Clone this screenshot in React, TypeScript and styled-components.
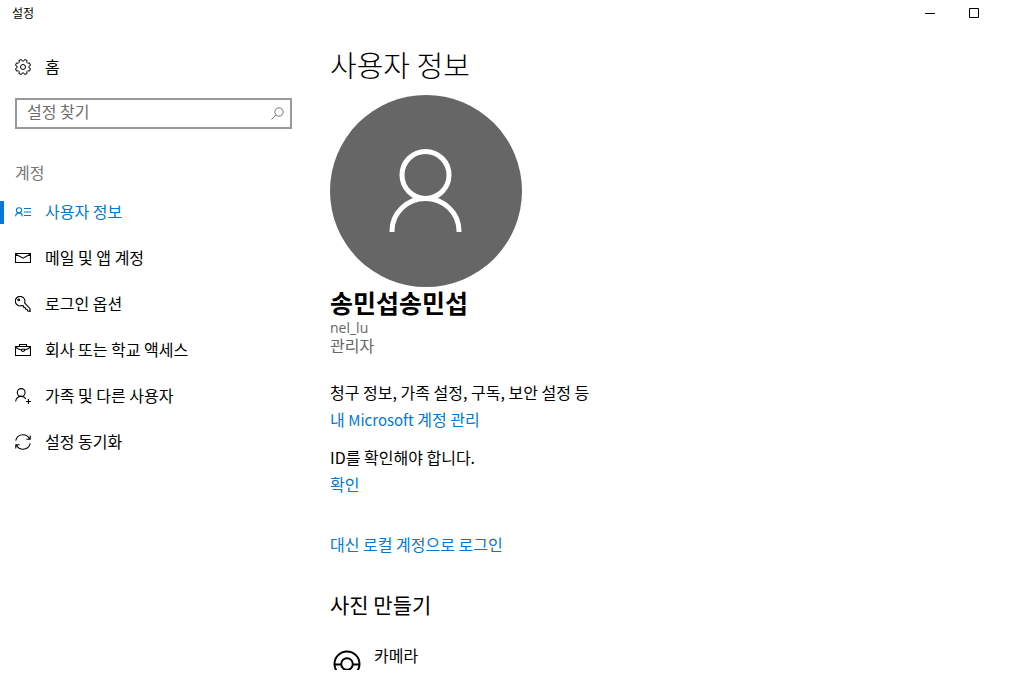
import React from "react";
import styled, { createGlobalStyle } from "styled-components";

const GlobalStyle = createGlobalStyle`
  * { box-sizing: border-box; }
  body {
    margin: 0;
    background: #fff;
    color: #000;
    font-family: "Noto Sans CJK KR", sans-serif;
    font-size: 16px;
    line-height: 24px;
  }
  h1, h2, h3, p, ul { margin: 0; padding: 0; }
`;

const Window = styled.div`
  height: 100vh;
  display: flex;
  flex-direction: column;
  overflow: hidden;
  padding-bottom: 6px;
`;

const TitleBar = styled.header`
  flex: none;
  height: 28px;
  display: flex;
  align-items: center;
  justify-content: space-between;
  padding: 0 28px 2px 12px;
  font-size: 12px;
`;

const Controls = styled.div`
  display: flex;
`;

const ControlButton = styled.button`
  width: 44px;
  height: 26px;
  padding: 0;
  border: 0;
  background: none;
  display: flex;
  align-items: center;
  justify-content: center;
`;

const Body = styled.div`
  flex: 1;
  min-height: 0;
  display: flex;
`;

const Sidebar = styled.aside`
  flex: none;
  width: 330px;
  padding-top: 15px;
`;

const NavLink = styled.a<{ $active?: boolean }>`
  height: 46px;
  display: flex;
  align-items: center;
  gap: 14px;
  position: relative;
  padding-left: 15px;
  color: ${(p) => (p.$active ? "#0078d7" : "#000")};
  text-decoration: none;

  svg { margin-top: 2px; }

  &::before {
    content: "";
    display: ${(p) => (p.$active ? "block" : "none")};
    position: absolute;
    left: 0;
    top: 13px;
    width: 4px;
    height: 23px;
    background: #0078d7;
  }
`;

const NavList = styled.ul`
  list-style: none;
`;

const SearchBox = styled.label`
  display: flex;
  align-items: center;
  height: 31px;
  margin: 9px 38px 0 15px;
  padding: 0 6px 0 10px;
  border: 2px solid #999;
`;

const SearchInput = styled.input`
  flex: 1;
  min-width: 0;
  height: 27px;
  padding: 0 0 5px;
  border: 0;
  outline: 0;
  background: none;
  font: 16px/22px "Noto Sans CJK KR", sans-serif;
  &::placeholder { color: #6d6d6d; opacity: 1; }
`;

const GroupTitle = styled.h2`
  margin: 31px 0 4px 15px;
  font-size: 16px;
  font-weight: 400;
  color: #767676;
`;

const Content = styled.main`
  flex: 1;
  min-width: 0;
  overflow: hidden;
  padding-top: 16px;
`;

const PageTitle = styled.h1`
  font-size: 29px;
  line-height: 40px;
  font-weight: 300;
`;

const Avatar = styled.svg`
  display: block;
  width: 192px;
  height: 192px;
  margin-top: 11px;
`;

const UserName = styled.h2`
  font-size: 25px;
  line-height: 30px;
  font-weight: 700;
`;

const UserDetail = styled.p`
  font-family: "Open Sans", "Noto Sans CJK KR", sans-serif;
  line-height: 19px;
  color: #666;
`;

const UserId = styled(UserDetail)`
  margin-top: 1px;
  font-size: 14px;
`;

const Section = styled.section<{ $top: number }>`
  display: flex;
  flex-direction: column;
  align-items: flex-start;
  gap: 3px;
  margin-top: ${(p) => p.$top}px;
`;

const Link = styled.a`
  color: #0078d7;
  text-decoration: none;
`;

const Latin = styled.span`
  font-size: 15px;
`;

const SectionTitle = styled.h3`
  margin-top: 34px;
  font-size: 21px;
  line-height: 28px;
  font-weight: 400;
`;

const CameraLink = styled.a`
  display: flex;
  gap: 13px;
  margin-top: 25px;
  padding-left: 3px;
  color: #000;
  text-decoration: none;
  svg { margin-top: 7px; }
`;

const Glyph = ({ children }: { children: React.ReactNode }) => (
  <svg width="16" height="16" viewBox="0 0 16 16" fill="none" stroke="currentColor" strokeWidth="1.1" aria-hidden="true">
    {children}
  </svg>
);

const gearPath = Array.from({ length: 8 }, (_, i) => {
  const at = (r: number, deg: number) => {
    const a = ((deg + 22.5 + i * 45) * Math.PI) / 180;
    return `${(8 + r * Math.sin(a)).toFixed(2)} ${(8 - r * Math.cos(a)).toFixed(2)}`;
  };
  return `${i ? "L" : "M"}${at(7.7, -10)} L${at(7.7, 10)} L${at(6, 15)} L${at(6, 30)}`;
}).join(" ") + "Z";

const items = [
  {
    label: "사용자 정보",
    icon: <><circle cx="4" cy="6.3" r="2.6" /><path d="M.5 12.300c.4-2.200 1.700-3.400 3.500-3.400s3.100 1.200 3.500 3.400M9 4.500h7M9 8h7M9 11.500h7" /></>,
  },
  {
    label: "메일 및 앱 계정",
    icon: <path d="M.5 3.500h15v9H.5zM.8 4.200 8 8.200l7.200-4" />,
  },
  {
    label: "로그인 옵션",
    icon: <><path d="M9.600 6.900A4.800 4.800 0 1 0 6.900 9.600l1.500.2.300 1.500 1.500.3.300 1.500 1.600.3.600 1.500 2.500.4-.2-2.600z" /><circle cx="3.700" cy="3.900" r=".9" /></>,
  },
  {
    label: "회사 또는 학교 액세스",
    icon: <path d="M.5 4.500h15v9H.5zM4.500 4.300V2.500h7v1.800M.8 5.200c1.600 1.300 3.500 2.300 5.700 2.800M15.200 5.200c-1.600 1.300-3.500 2.300-5.700 2.800M6.500 7.200h3v1.500q-1.500 1.500-3 0z" />,
  },
  {
    label: "가족 및 다른 사용자",
    icon: <><circle cx="6.200" cy="4.500" r="3.900" /><path d="M.6 13.500c.5-3.200 2.600-5.100 5.600-5.100 2.100 0 3.700.9 4.700 2.500M13.400 11v5M11 13.500h5" /></>,
  },
  {
    label: "설정 동기화",
    icon: <path d="M.7 6.600C1.700 3 4.500.8 8 .8c2.900 0 5.300 1.600 6.600 4.200M15.200 1.500V5.300h-3.800M15.300 9.400c-1 3.600-3.800 5.800-7.300 5.800-2.900 0-5.300-1.600-6.600-4.200M.8 14.500v-3.800h3.800" />,
  },
];

export default function App() {
  return (
    <Window>
      <GlobalStyle />
      <TitleBar>
        <span>설정</span>
        <Controls>
          <ControlButton aria-label="최소화">
            <svg width="10" height="10"><path d="M0 5.500h10" stroke="#000" /></svg>
          </ControlButton>
          <ControlButton aria-label="최대화">
            <svg width="10" height="10"><path d="M.5.5h9v9h-9z" fill="none" stroke="#000" /></svg>
          </ControlButton>
        </Controls>
      </TitleBar>
      <Body>
        <Sidebar>
          <NavLink href="#home">
            <Glyph><path d={gearPath} strokeWidth="1" /><circle cx="8" cy="8" r="2.500" strokeWidth="1" /></Glyph>
            홈
          </NavLink>
          <SearchBox>
            <SearchInput type="text" placeholder="설정 찾기" aria-label="설정 찾기" />
            <svg width="13" height="13" viewBox="0 0 13 13" fill="none" stroke="#777" aria-hidden="true">
              <circle cx="8" cy="5" r="4.200" /><path d="M5 8 .5 12.500" />
            </svg>
          </SearchBox>
          <GroupTitle>계정</GroupTitle>
          <nav>
            <NavList>
              {items.map((item, i) => (
                <li key={item.label}>
                  <NavLink href="#" $active={i === 0} aria-current={i === 0 ? "page" : undefined}>
                    <Glyph>{item.icon}</Glyph>
                    {item.label}
                  </NavLink>
                </li>
              ))}
            </NavList>
          </nav>
        </Sidebar>
        <Content>
          <PageTitle>사용자 정보</PageTitle>
          <Avatar viewBox="0 0 192 192" aria-hidden="true">
            <circle cx="96" cy="96" r="96" fill="#666" />
            <g fill="none" stroke="#fff" strokeWidth="5">
              <circle cx="95.500" cy="80" r="23.500" />
              <path d="M62 137v-1a33.500 32.500 0 0 1 67 0v1" />
            </g>
          </Avatar>
          <UserName>송민섭송민섭</UserName>
          <UserId>nel_lu</UserId>
          <UserDetail>관리자</UserDetail>
          <Section $top={24}>
            <p>청구 정보, 가족 설정, 구독, 보안 설정 등</p>
            <Link href="#account">내 <Latin>Microsoft</Latin> 계정 관리</Link>
          </Section>
          <Section $top={13}>
            <p>ID를 확인해야 합니다.</p>
            <Link href="#verify">확인</Link>
          </Section>
          <Section $top={36}>
            <Link href="#local">대신 로컬 계정으로 로그인</Link>
          </Section>
          <SectionTitle>사진 만들기</SectionTitle>
          <CameraLink href="#camera">
            <svg width="28" height="28" viewBox="0 0 28 28" fill="none" stroke="#000" strokeWidth="2" aria-hidden="true">
              <circle cx="14" cy="14" r="12.500" /><circle cx="14" cy="14" r="5.800" /><path d="M1.500 14.500h6.700M19.800 14.500h6.700" />
            </svg>
            카메라
          </CameraLink>
        </Content>
      </Body>
    </Window>
  );
}
